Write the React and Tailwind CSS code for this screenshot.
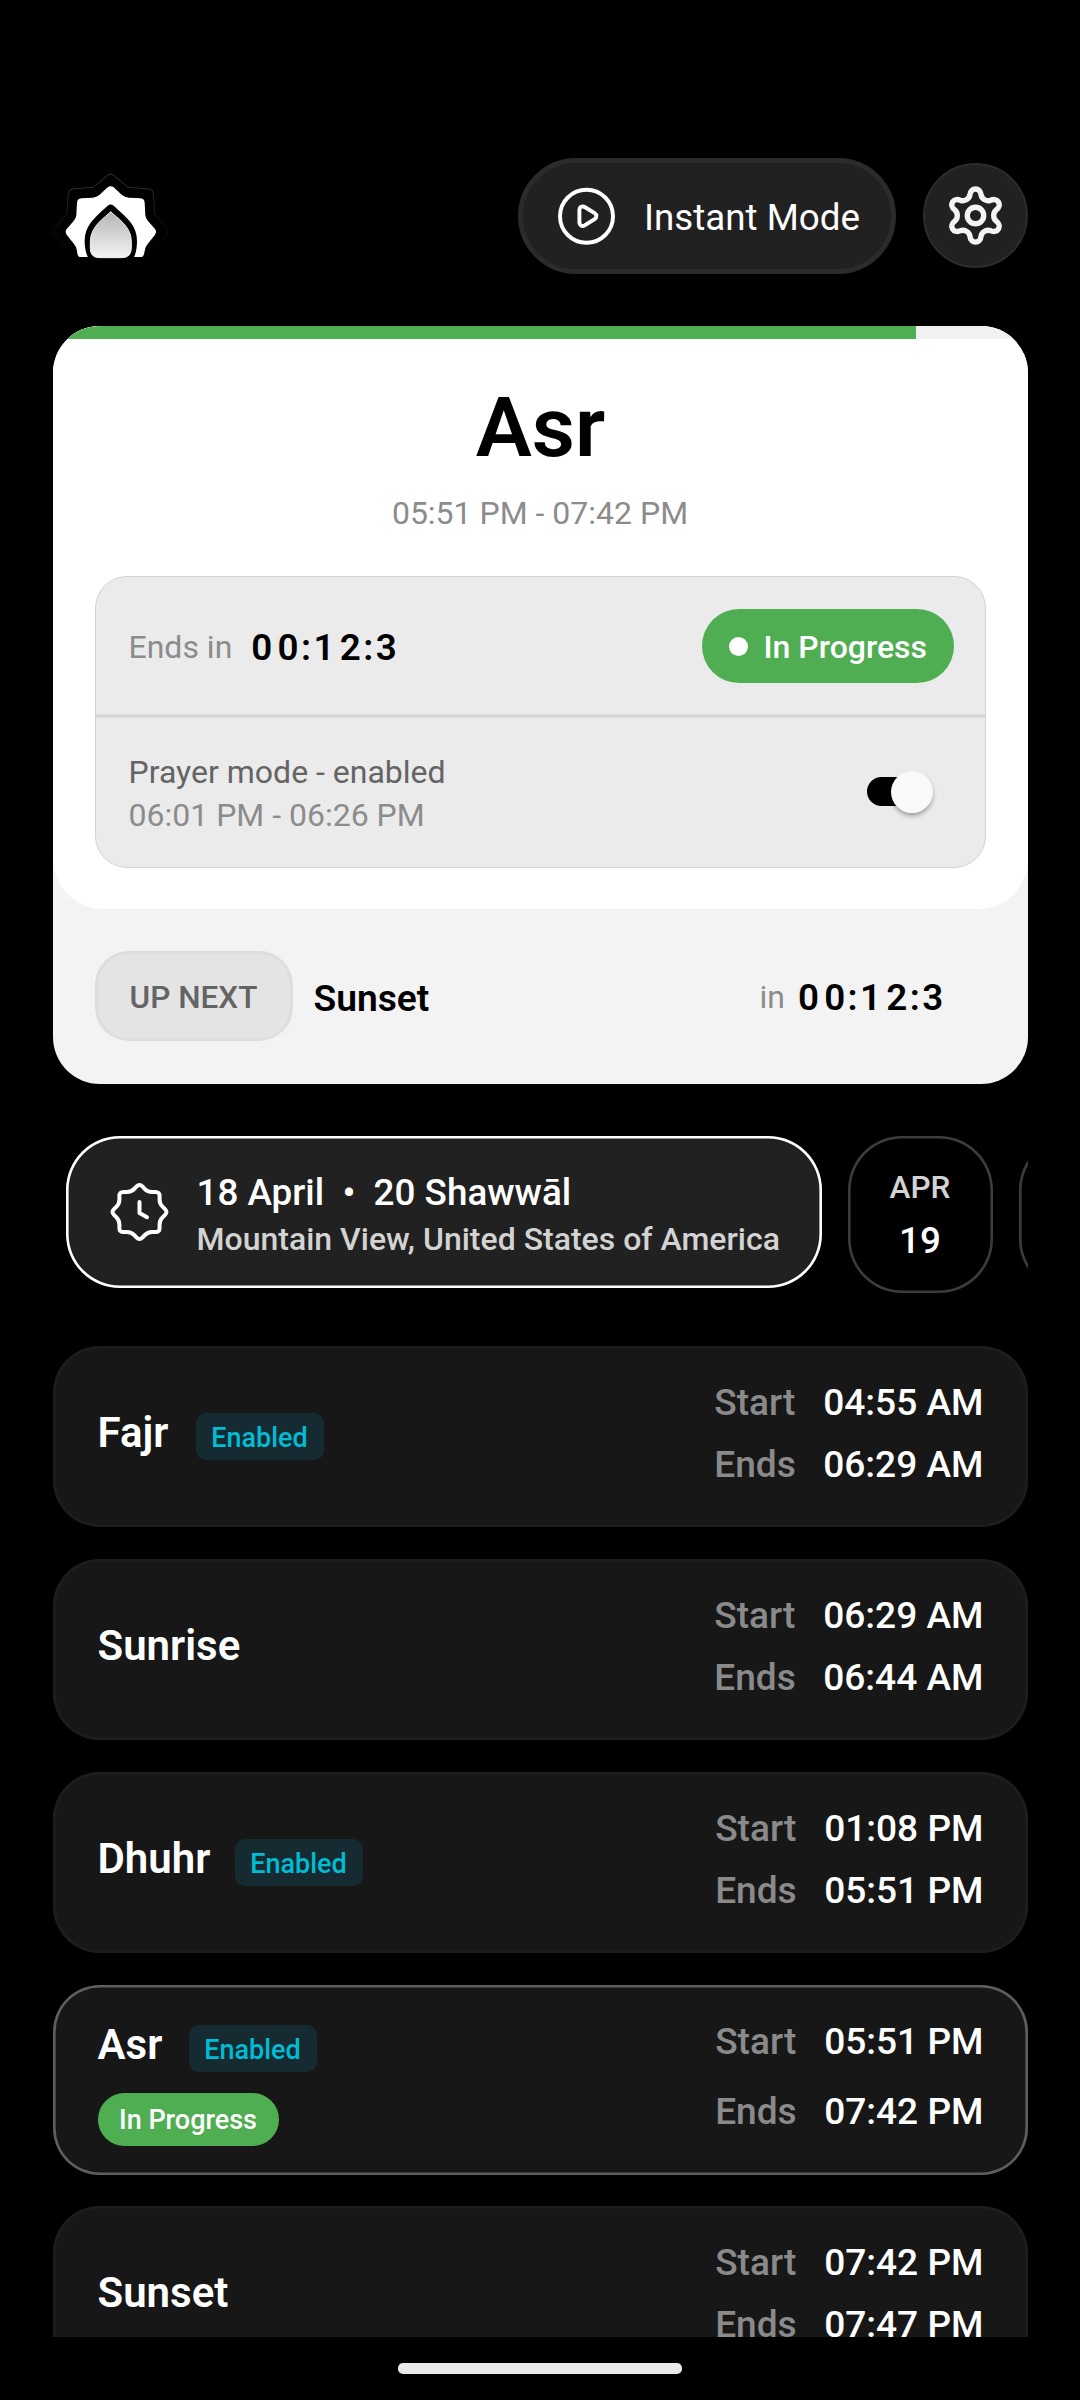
import React from "react";

const rotate = ([x, y], deg) => {
  const a = (deg * Math.PI) / 180;
  return [x * Math.cos(a) - y * Math.sin(a), x * Math.sin(a) + y * Math.cos(a)];
};
const fmt = (p) => p.map((n) => n.toFixed(2)).join(" ");

// Six-lobed cog outline centred on the origin
const gearPath = (() => {
  let d = "M" + fmt([-5.6, -20.5]);
  for (let k = 0; k < 6; k++) {
    const r = (p) => fmt(rotate(p, k * 60));
    d += `C${r([-5, -28.6])} ${r([5, -28.6])} ${r([5.6, -20.5])}`;
    d += `C${r([6.3, -16.5])} ${r([11.1, -13.7])} ${fmt(rotate([-5.6, -20.5], (k + 1) * 60))}`;
  }
  return d + "Z";
})();

// Eight-pointed badge outline with softened corners
const badgePath = (() => {
  const pts = [];
  for (let k = 0; k < 16; k++) pts.push(rotate([0, k % 2 ? -21.6 : -28.6], k * 22.5));
  const mix = (a, b, t) => [a[0] + (b[0] - a[0]) * t, a[1] + (b[1] - a[1]) * t];
  return (
    pts
      .map((p, i) => {
        const prev = pts[(i + 15) % 16];
        const next = pts[(i + 1) % 16];
        return `${i ? "L" : "M"}${fmt(mix(p, prev, 0.38))}Q${fmt(p)} ${fmt(mix(p, next, 0.38))}`;
      })
      .join("") + "Z"
  );
})();

function Logo() {
  return (
    <svg viewBox="39 69 348 261" className="h-[87px] w-[116px]">
      <defs>
        <linearGradient id="door" x1="0" y1="0" x2="0" y2="1">
          <stop offset="0" stopColor="#b4b4b4" />
          <stop offset="1" stopColor="#f4f4f4" />
        </linearGradient>
        <linearGradient id="rim" x1="0" y1="0" x2="0" y2="1">
          <stop offset="0" stopColor="#6a6a6a" />
          <stop offset="0.5" stopColor="#333333" />
          <stop offset="1" stopColor="#0c0c0c" />
        </linearGradient>
      </defs>
      <path
        d="M80 296L42 250Q38 244 42 238L80 192L85 130Q87 118 98 117L160 112L204 75Q212 69 220 75L264 112L328 117Q338 118 340 130L344 192L382 238Q386 244 382 250L344 296"
        fill="none"
        stroke="url(#rim)"
        strokeWidth="1.6"
      />
      <path
        d="M118 321Q112 318 111 303Q109 289 102 282L80 254Q74 245 80 237L101 213Q108 206 109 195L111 158Q112 146 124 145L158 143Q170 142 178 135L203 112Q212 105 221 112L246 135Q254 142 266 143L302 145Q313 146 314 158L316 195Q317 206 324 213L345 237Q351 245 345 254L323 282Q316 289 314 303Q312 318 306 321Z"
        fill="#fff"
      />
      <path
        d="M145 324Q134 304 134 272C134 230 160 208 180 188L203 167Q212 160 221 167L244 188C265 208 291 230 291 272Q291 304 281 324Z"
        fill="#000"
      />
      <path
        d="M212 185C228 202 275 228 274 275V295Q273 323 246 323H178Q151 323 151 295V275C151 228 196 202 212 185Z"
        fill="url(#door)"
        stroke="#f0f0f0"
        strokeWidth="3"
      />
    </svg>
  );
}

function PlayIcon() {
  return (
    <svg viewBox="0 0 24 24" className="size-[63px]" fill="none" stroke="#fff" strokeWidth="1.5" strokeLinejoin="round">
      <circle cx="12" cy="11.9" r="10.1" />
      <path d="M15.1 10.7C16 11.3 16 12.4 15.1 13L11.3 15.4C10.3 16 9.3 15.4 9.3 14.3V9.5C9.3 8.4 10.3 7.8 11.3 8.4Z" />
    </svg>
  );
}

function Header() {
  return (
    <header className="flex h-[116px] items-center pr-[52px] pl-[53px]">
      <Logo />
      <div className="ml-auto flex h-[116px] w-[378px] items-center rounded-full border-[5px] border-[#2b2b2b] bg-[#212121] pl-8">
        <PlayIcon />
        <span className="ml-[26px] pt-[4px] text-[36.75px] leading-[44px]">Instant Mode</span>
      </div>
      <div className="-mt-px ml-[27px] grid size-[105px] place-items-center rounded-full border-2 border-[#2c2c2c] bg-[#212121]">
        <svg viewBox="-31.5 -31.5 63 63" className="size-[63px]" fill="none" stroke="#f4f4f4" strokeWidth="5.4">
          <path d={gearPath} />
          <circle r="8.2" />
        </svg>
      </div>
    </header>
  );
}

function Countdown() {
  return (
    <span className="text-[36.75px] leading-[44px] font-semibold tracking-[5.25px] text-black">
      00<span className="mx-[-2.8px]">:</span>12<span className="mx-[-2.8px]">:</span>3
    </span>
  );
}

function CurrentCard() {
  return (
    <section className="mx-auto mt-[52px] w-[975px] overflow-hidden rounded-[47px] bg-[#f3f3f3]">
      <div className="h-[583px] overflow-hidden rounded-b-[50px] bg-white">
        <div className="h-[13px] bg-[#f1f1f1]">
          <div className="h-full w-[863px] bg-[#4fae52]" />
        </div>
        <h1 className="mt-[40px] pl-px text-center text-[84px] leading-[98px] font-semibold text-black">Asr</h1>
        <p className="mt-[17px] text-center text-[32px] leading-[38px] text-[#8c8c8c]">05:51 PM - 07:42 PM</p>
        <div className="mt-[44px] ml-[42px] h-[292px] w-[891px] rounded-[32px] border border-[#d2d2d2] bg-[#ebebeb]">
          <div className="flex h-[137px] items-center pt-[1px] pr-[31px] pl-[33px]">
            <span className="pt-[2px] text-[32px] leading-[38px] text-[#8c8c8c]">Ends in</span>
            <span className="ml-[19px] pt-[3px]">
              <Countdown />
            </span>
            <span className="ml-auto flex h-[74px] w-[252px] items-center rounded-full bg-[#4fae52] pl-[27px]">
              <span className="size-[19px] rounded-full bg-white" />
              <span className="ml-[16px] pt-[2px] text-[32px] leading-[38px] font-medium">In Progress</span>
            </span>
          </div>
          <div className="h-1 border-y border-[#dedede] bg-[#d3d3d3]" />
          <div className="flex h-[149px] items-center justify-between pr-[52px] pb-[2px] pl-[33px]">
            <div className="pt-[4px] text-[32px] leading-[43px]">
              <p className="text-[#646464]">Prayer mode - enabled</p>
              <p className="text-[#8c8c8c]">06:01 PM - 06:26 PM</p>
            </div>
            <div className="flex h-[29px] w-[66px] items-center justify-end rounded-full bg-gradient-to-r from-black from-60% to-transparent to-60%">
              <span className="size-[42px] shrink-0 rounded-full bg-[#fafafa] shadow-[0_3px_4px_rgba(0,0,0,0.3)]" />
            </div>
          </div>
        </div>
      </div>
      <div className="flex h-[175px] items-center pr-[79px] pb-[2px] pl-[42px]">
        <span className="grid h-[90px] w-[198px] place-items-center rounded-[34px] border-3 border-[#dedede] bg-[#e4e4e4] pt-[4px] text-[31.5px] leading-[38px] font-medium text-[#646464]">
          UP NEXT
        </span>
        <span className="ml-[21px] pt-[4px] text-[37.2px] leading-[44px] font-semibold text-black">Sunset</span>
        <span className="ml-auto pt-[2px] text-[32px] leading-[38px] text-[#8c8c8c]">in</span>
        <span className="ml-[13px] pt-[4px]">
          <Countdown />
        </span>
      </div>
    </section>
  );
}

function DateStrip() {
  return (
    <section className="mx-auto mt-[52px] flex h-[157px] w-[975px] overflow-hidden pl-[13px]">
      <div className="flex h-[152px] w-[756px] shrink-0 items-center rounded-[54px] bg-[#212121] pl-[42px] shadow-[inset_0_0_0_2.6px_#fff]">
        <svg viewBox="-31.5 -31 63 63" className="size-[63px] shrink-0" fill="none" stroke="#fff" strokeWidth="4" strokeLinejoin="round" strokeLinecap="round">
          <path d={badgePath} />
          <path d="M0 -10V1L7.5 5.2" />
        </svg>
        <div className="ml-[26px] pt-[7px] font-medium whitespace-nowrap">
          <p className="text-[36.85px] leading-[48px] whitespace-pre">18 April&nbsp; •&nbsp; 20 Shawwāl</p>
          <p className="text-[32px] leading-[45px] text-[#d3d3d3]">Mountain View, United States of America</p>
        </div>
      </div>
      <div className="ml-[26px] flex h-[157px] w-[145px] shrink-0 flex-col items-center rounded-[54px] pt-[26px] font-medium shadow-[inset_0_0_0_2.6px_#3c3c3c]">
        <span className="text-[31.5px] leading-[52px] text-[#d3d3d3]">APR</span>
        <span className="text-[36.75px] leading-[54px]">19</span>
      </div>
      <div className="ml-[26px] h-[157px] w-[145px] shrink-0 rounded-[54px] shadow-[inset_0_0_0_2.6px_#3c3c3c]" />
    </section>
  );
}

const prayers = [
  { name: "Fajr", nameWidth: "w-[98px]", enabled: true, start: "04:55 AM", end: "06:29 AM" },
  { name: "Sunrise", start: "06:29 AM", end: "06:44 AM" },
  { name: "Dhuhr", nameWidth: "w-[137px]", enabled: true, start: "01:08 PM", end: "05:51 PM" },
  { name: "Asr", nameWidth: "w-[91px]", enabled: true, active: true, start: "05:51 PM", end: "07:42 PM" },
  { name: "Sunset", start: "07:42 PM", end: "07:47 PM" },
];

function PrayerCard({ name, nameWidth = "", enabled, active, start, end }) {
  return (
    <li
      className={
        active
          ? "-mb-px flex h-[190px] shrink-0 justify-between rounded-[47px] bg-[#171717] pr-[44px] pl-[45px] shadow-[inset_0_0_0_2.6px_#5e5e5e]"
          : "flex h-[181px] shrink-0 justify-between rounded-[47px] bg-[#171717] pr-[44px] pl-[45px] shadow-[inset_0_0_0_2.6px_#1d1d1d]"
      }
    >
      <div className={active ? "pt-[40px]" : "pt-[67px]"}>
        <div className="flex h-[47px] items-start">
          <span className={`text-[42px] leading-[40px] font-semibold ${nameWidth}`}>{name}</span>
          {enabled && (
            <span className="h-[47px] w-[128px] rounded-[10px] bg-[#152b31] text-center text-[27px] leading-[50px] font-medium text-[#00bcd4]">
              Enabled
            </span>
          )}
        </div>
        {active && (
          <div className="mt-[21px] h-[53px] w-[181px] rounded-full bg-[#4fae52] text-center text-[27px] leading-[55px] font-medium">
            In Progress
          </div>
        )}
      </div>
      <dl
        className={
          active
            ? "grid auto-rows-[62px] grid-cols-[109px_auto] content-start gap-y-2 pt-[26px] text-[37.1px] leading-[62px] font-medium"
            : "grid auto-rows-[62px] grid-cols-[109px_auto] content-start pt-[26px] text-[37.1px] leading-[62px] font-medium"
        }
      >
        <dt className="text-[#8a8a8a]">Start</dt>
        <dd>{start}</dd>
        <dt className="text-[#8a8a8a]">Ends</dt>
        <dd>{end}</dd>
      </dl>
    </li>
  );
}

export default function App() {
  return (
    <main className="flex h-[2400px] w-[1080px] flex-col overflow-hidden bg-black pt-[158px] font-[Roboto,sans-serif] text-white">
      <Header />
      <CurrentCard />
      <DateStrip />
      <ul className="mx-auto mt-[53px] flex h-[991px] w-[975px] flex-col gap-8 overflow-hidden">
        {prayers.map((p) => (
          <PrayerCard key={p.name} {...p} />
        ))}
      </ul>
      <div className="mx-auto mt-[26px] h-[11px] w-[284px] rounded-[5px] bg-[#eaeaea]" />
    </main>
  );
}
